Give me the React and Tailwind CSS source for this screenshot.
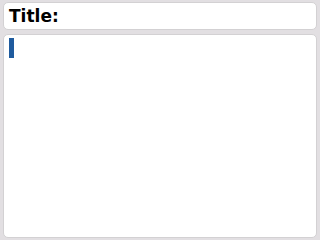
export default function App() {
  return (
    <div className="w-[320px] h-[240px] bg-[#e2dfe2] flex flex-col gap-[4px] px-[3px] pt-[2px] pb-[2px]" style={{ fontFamily: '"DejaVu Sans", sans-serif' }}>
      <div className="h-[28px] bg-white border border-[#d3d1d3] rounded-[5px] flex items-center px-[5px]">
        <span className="text-[17px] font-bold text-black leading-none">Title:</span>
      </div>
      <div className="flex-1 bg-white border border-[#d3d1d3] rounded-[5px] px-[5px] pt-[3px]">
        <div className="w-[5px] h-[20px] bg-[#1f5b9e]" />
      </div>
    </div>
  );
}
